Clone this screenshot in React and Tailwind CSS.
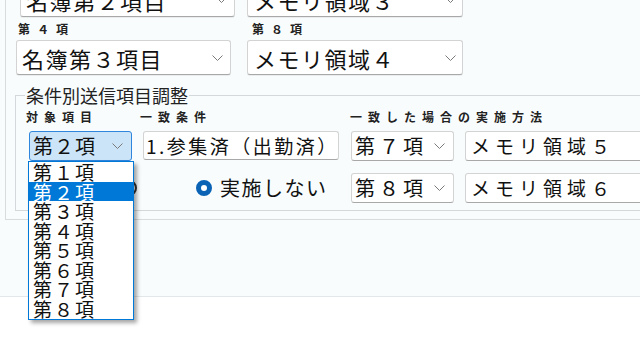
import React from "react";

function Chevron() {
  return (
    <svg width="11" height="6" viewBox="0 0 11 6" className="shrink-0">
      <polyline points="0.5,0.5 5.5,5.5 10.5,0.5" fill="none" stroke="#7a7a7a" strokeWidth="1" />
    </svg>
  );
}

function Combo({ box, text, textCls, chevCls }) {
  return (
    <div className={"flex items-center justify-between shrink-0 rounded-[3px] border " + box}>
      <span className={"whitespace-nowrap " + textCls}>{text}</span>
      <span className={chevCls}>
        <Chevron />
      </span>
    </div>
  );
}

const bigBox =
  "h-[35px] bg-white border-[#d3d3d3] border-b-[#a8a8a8] shadow-[0_1px_0_rgba(0,0,0,0.06)]";
const smallBox = "h-[30px] w-[103px] bg-white border-[#d3d3d3] border-b-[#a8a8a8]";

export default function App() {
  const items = ["第１項", "第２項", "第３項", "第４項", "第５項", "第６項", "第７項", "第８項"];
  return (
    <div className="relative w-[640px] h-[360px] overflow-hidden bg-white font-['Noto_Sans_CJK_JP',sans-serif] text-[#111]">
      <div className="flex flex-col h-[297px] bg-[#f8fcfd] border-b border-[#e4e7e9]">
        <div className="-mt-[18px] ml-[5px] w-[700px] border-l border-b border-[#d9dcdd] pb-[8px]">
          {/* row 1 */}
          <div className="flex pl-[14px]">
            <Combo
              box={"w-[215px] " + bigBox}
              text="名簿第２項目"
              textCls="pl-[5px] text-[22px] leading-[26px] tracking-[1.5px]"
              chevCls="pr-[7px]"
            />
            <div className="ml-[12px]">
              <Combo
                box={"w-[216px] " + bigBox}
                text="メモリ領域３"
                textCls="pl-[6px] text-[22px] leading-[26px] tracking-[1.5px]"
                chevCls="pr-[6px]"
              />
            </div>
          </div>
          {/* labels */}
          <div className="flex pl-[12px] mt-[5px] h-[14px] text-[12px] leading-[14px] tracking-[7px] font-semibold text-[#222]">
            <span className="w-[234px]">第４項</span>
            <span>第８項</span>
          </div>
          {/* row 2 */}
          <div className="flex pl-[10px] mt-[4px]">
            <Combo
              box={"w-[215px] " + bigBox}
              text="名簿第３項目"
              textCls="pl-[5px] text-[22px] leading-[26px] tracking-[1.5px]"
              chevCls="pr-[7px]"
            />
            <div className="ml-[16px]">
              <Combo
                box={"w-[216px] " + bigBox}
                text="メモリ領域４"
                textCls="pl-[6px] text-[22px] leading-[26px] tracking-[1.5px]"
                chevCls="pr-[6px]"
              />
            </div>
          </div>
          {/* group box */}
          <fieldset className="ml-[9px] mt-[11px] border border-[#d5d8da] pb-[7px]">
            <legend className="ml-[9px] px-[1px] text-[18px] leading-[18px] text-[#222]">条件別送信項目調整</legend>
            <div className="flex pl-[10px] mt-[6px] h-[14px] text-[12px] leading-[14px] tracking-[6px] font-semibold text-[#222]">
              <span className="w-[114px]">対象項目</span>
              <span className="w-[210px]">一致条件</span>
              <span>一致した場合の実施方法</span>
            </div>
            {/* row A */}
            <div className="flex pl-[13px] mt-[7px]">
              <Combo
                box="h-[30px] w-[103px] bg-[#cce4f7] border-[#2f86dc]"
                text="第２項"
                textCls="pl-[3px] text-[20px] leading-[24px] tracking-[1px]"
                chevCls="pr-[8px]"
              />
              <div className="ml-[11px] h-[29px] w-[196px] overflow-hidden rounded-[3px] border border-[#d3d3d3] border-b-[#a8a8a8] bg-white flex items-center pl-[2px] text-[19px] leading-[24px] tracking-[2.5px] whitespace-nowrap">
                1.参集済（出勤済）
              </div>
              <div className="ml-[12px]">
                <Combo
                  box={smallBox}
                  text="第７項"
                  textCls="pl-[3px] text-[20px] leading-[24px] tracking-[4px]"
                  chevCls="pr-[8px]"
                />
              </div>
              <div className="ml-[11px] h-[30px] w-[240px] rounded-[3px] border border-[#d3d3d3] border-b-[#a8a8a8] bg-white flex items-center pl-[5px] text-[19px] leading-[24px] tracking-[5px] whitespace-nowrap">
                メモリ領域５
              </div>
            </div>
            {/* row B */}
            <div className="flex items-center pl-[105px] mt-[12px] h-[30px]">
              <div className="w-[16px] h-[16px] rounded-full border-2 border-[#333] bg-white shrink-0" />
              <div className="ml-[59px] w-[16px] h-[16px] rounded-full border-[5px] border-[#0b63b6] bg-white shrink-0" />
              <span className="ml-[8px] w-[107px] text-[20px] leading-[24px] tracking-[1.5px] whitespace-nowrap">実施しない</span>
              <div className="ml-[24px]">
                <Combo
                  box={smallBox}
                  text="第８項"
                  textCls="pl-[3px] text-[20px] leading-[24px] tracking-[4px]"
                  chevCls="pr-[8px]"
                />
              </div>
              <div className="ml-[11px] h-[30px] w-[240px] rounded-[3px] border border-[#d3d3d3] border-b-[#a8a8a8] bg-white flex items-center pl-[5px] text-[19px] leading-[24px] tracking-[5px] whitespace-nowrap">
                メモリ領域６
              </div>
            </div>
          </fieldset>
        </div>
      </div>

      {/* dropdown list overlay */}
      <div className="absolute left-[28px] top-[161px] w-[106px] h-[159px] border border-[#0078d7] bg-white shadow-[3px_3px_4px_rgba(0,0,0,0.35)]">
        {items.map((t, i) => (
          <div
            key={t}
            className={
              "h-[19.5px] pl-[4px] text-[19px] leading-[19.5px] tracking-[2px] whitespace-nowrap " +
              (i === 1 ? "bg-[#0078d7] text-white" : "text-[#111]")
            }
          >
            {t}
          </div>
        ))}
      </div>
    </div>
  );
}
